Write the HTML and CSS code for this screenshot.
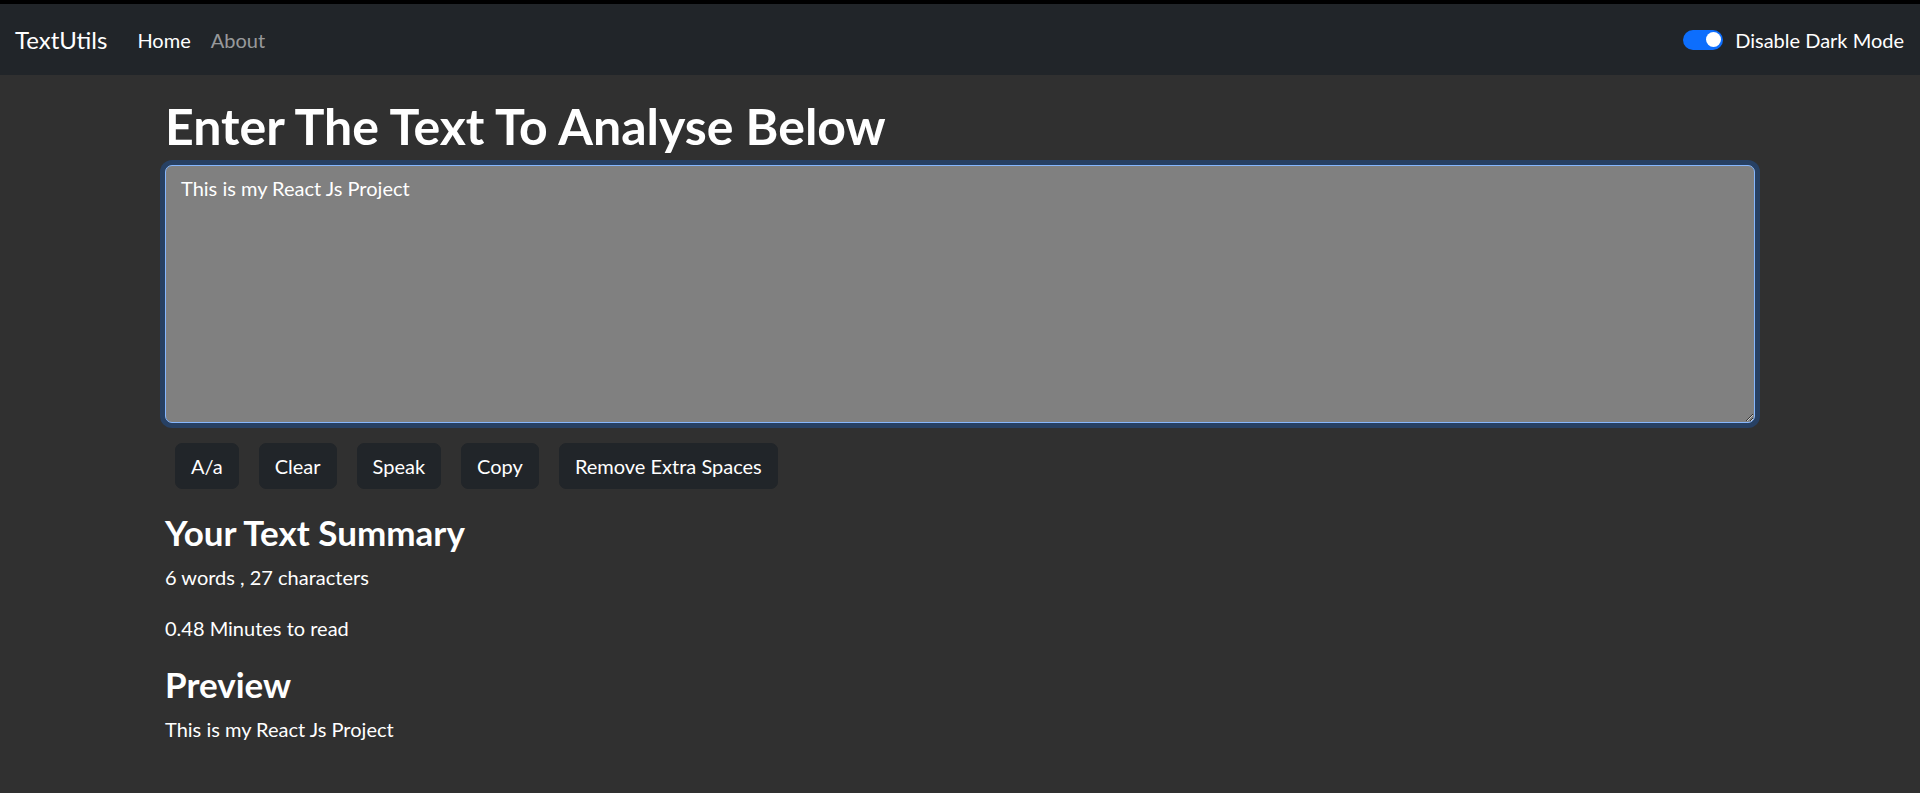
FILE: index.html
```html
<!DOCTYPE html>
<html lang="en">
<head>
<meta charset="utf-8">
<title>TextUtils</title>
<link rel="stylesheet" href="styles.css">
</head>
<body>
<div class="topstrip"></div>
<nav class="navbar">
  <a class="brand" href="#">TextUtils</a>
  <ul class="nav-links">
    <li><a class="nav-link active" href="#">Home</a></li>
    <li><a class="nav-link" href="#">About</a></li>
  </ul>
  <div class="switch-wrap">
    <span class="switch"><span class="knob"></span></span>
    <label class="switch-label">Disable Dark Mode</label>
  </div>
</nav>
<main class="container">
  <h1 class="title">Enter The Text To Analyse Below</h1>
  <div class="area-wrap">
    <textarea class="text-area" rows="8">This is my React Js Project</textarea>
  </div>
  <div class="btn-row">
    <button class="btn">A/a</button>
    <button class="btn">Clear</button>
    <button class="btn">Speak</button>
    <button class="btn">Copy</button>
    <button class="btn">Remove Extra Spaces</button>
  </div>
  <section class="summary">
    <h2 class="sub">Your Text Summary</h2>
    <p class="para">6 words , 27 characters</p>
    <p class="para reading">0.48 Minutes to read</p>
    <h2 class="sub">Preview</h2>
    <p class="para">This is my React Js Project</p>
  </section>
</main>
</body>
</html>
```

FILE: styles.css
```css
* { box-sizing: border-box; }
html, body { margin: 0; padding: 0; }
body {
  background: #303030;
  color: #ffffff;
  font-family: "Lato", "Open Sans", sans-serif;
  font-size: 20px;
  line-height: 30px;
  height: 793px;
  overflow: hidden;
}
.topstrip { height: 4px; background: #000; }
.navbar {
  height: 71px;
  background: #212529;
  display: flex;
  align-items: center;
  padding: 0 16px 0 15px;
}
.brand {
  color: #fff;
  text-decoration: none;
  font-size: 24px;
  line-height: 36px;
  margin-right: 20px;
}
.nav-links {
  list-style: none;
  margin: 0;
  padding: 0;
  display: flex;
}
.nav-link {
  display: block;
  padding: 0 10px;
  color: rgba(255,255,255,.55);
  text-decoration: none;
  font-size: 20px;
}
.nav-link.active { color: #fff; }
.switch-wrap {
  margin-left: auto;
  display: flex;
  align-items: center;
  gap: 12px;
}
.switch {
  width: 40px;
  height: 20px;
  border-radius: 10px;
  background: #0d6efd;
  position: relative;
  display: block;
}
.knob {
  position: absolute;
  width: 15px;
  height: 15px;
  border-radius: 50%;
  background: #fff;
  top: 2.5px;
  right: 2.5px;
}
.switch-label { font-size: 20px; }
.container { padding: 0 165px; }
.title {
  margin: 21px 0 9px;
  font-size: 50px;
  line-height: 60px;
  font-weight: 700;
}
.text-area {
  display: block;
  width: 100%;
  height: 258px;
  background: #808080;
  color: #fff;
  border: 1px solid #86b7fe;
  border-radius: 7px;
  box-shadow: 0 0 0 5px rgba(13,110,253,.25);
  padding: 7px 15px;
  font-family: inherit;
  font-size: 20px;
  line-height: 30px;
  outline: none;
  resize: vertical;
}
.btn-row {
  display: flex;
  gap: 20px;
  padding-left: 10px;
  margin-top: 20px;
}
.btn {
  background: #212529;
  color: #fff;
  border: 1px solid #212529;
  border-radius: 7px;
  font-family: inherit;
  font-size: 20px;
  line-height: 30px;
  padding: 7px 15px;
}
.summary { margin-top: 19px; }
.sub {
  margin: 0 0 6px;
  font-size: 35px;
  line-height: 48px;
  font-weight: 700;
}
.para { margin: 0 0 21px; }
.para.reading { margin-bottom: 17px; }
```
